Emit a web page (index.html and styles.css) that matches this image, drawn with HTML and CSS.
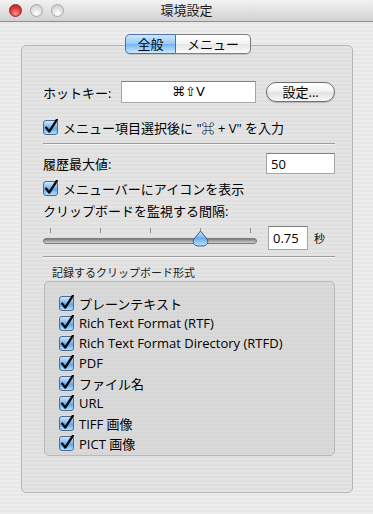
FILE: index.html
```html
<!DOCTYPE html>
<html lang="ja">
<head>
    <meta charset="UTF-8">
    <meta name="viewport" content="width=device-width, initial-scale=1.0">
    <title>環境設定</title>
    <link rel="stylesheet" href="styles.css">
</head>
<body>
    <svg class="defs" width="0" height="0">
        <defs>
            <linearGradient id="cbFill" x1="0" y1="0" x2="0" y2="1">
                <stop offset="0" stop-color="#d6ecff"/>
                <stop offset="0.45" stop-color="#7fb9f0"/>
                <stop offset="0.55" stop-color="#5fa6ea"/>
                <stop offset="1" stop-color="#b5e4ff"/>
            </linearGradient>
            <linearGradient id="thumbFill" x1="0" y1="0" x2="0" y2="1">
                <stop offset="0" stop-color="#cfe6fb"/>
                <stop offset="0.5" stop-color="#6eaeea"/>
                <stop offset="1" stop-color="#b9e4ff"/>
            </linearGradient>
            <linearGradient id="trackFill" x1="0" y1="0" x2="0" y2="1">
                <stop offset="0" stop-color="#6d6d6d"/>
                <stop offset="0.5" stop-color="#a8a8a8"/>
                <stop offset="1" stop-color="#d8d8d8"/>
            </linearGradient>
            <symbol id="cb" viewBox="0 0 16 16">
                <rect x="0.5" y="1.5" width="14" height="14" rx="2.5" fill="url(#cbFill)" stroke="#4a6b94"/>
                <path d="M3.2 8.6 L6.2 12.6 L13.8 0.8" fill="none" stroke="#0a0a0a" stroke-width="2.4" stroke-linecap="round" stroke-linejoin="round"/>
            </symbol>
        </defs>
    </svg>

    <div class="window">
        <div class="titlebar">
            <div class="lights">
                <span class="light close"></span>
                <span class="light"></span>
                <span class="light"></span>
            </div>
            <div class="title">環境設定</div>
            <div></div>
        </div>

        <div class="content">
            <div class="tabs">
                <span class="tab active">全般</span>
                <span class="tab">メニュー</span>
            </div>

            <div class="panel">
                <div class="row hotkey">
                    <span class="label">ホットキー:</span>
                    <span class="field keyfield">⌘⇧V</span>
                    <span class="button">設定...</span>
                </div>

                <label class="check first">
                    <svg class="cb"><use href="#cb"/></svg>
                    <span>メニュー項目選択後に "⌘ + V" を入力</span>
                </label>

                <div class="sep"></div>

                <div class="row history">
                    <span class="label">履歴最大値:</span>
                    <span class="field small">50</span>
                </div>

                <label class="check">
                    <svg class="cb"><use href="#cb"/></svg>
                    <span>メニューバーにアイコンを表示</span>
                </label>

                <div class="label interval">クリップボードを監視する間隔:</div>

                <div class="row slider-row">
                    <svg class="slider" width="214" height="24" viewBox="0 0 214 24">
                        <g stroke="#8a8a8a" stroke-width="1">
                            <line x1="7.5" y1="2" x2="7.5" y2="7"/>
                            <line x1="57.5" y1="2" x2="57.5" y2="7"/>
                            <line x1="107.5" y1="2" x2="107.5" y2="7"/>
                            <line x1="157.5" y1="2" x2="157.5" y2="7"/>
                            <line x1="207.5" y1="2" x2="207.5" y2="7"/>
                        </g>
                        <rect x="0.5" y="12.5" width="213" height="5" rx="2.5" fill="url(#trackFill)" stroke="#7c7c7c"/>
                        <path d="M157.5 5 L164 13 Q165.5 15 164.5 17.5 Q163 20 160 20 L155 20 Q152 20 150.5 17.5 Q149.5 15 151 13 Z" fill="url(#thumbFill)" stroke="#3f5f8c"/>
                    </svg>
                    <span class="field tiny">0.75</span>
                    <span class="unit">秒</span>
                </div>

                <div class="sep second"></div>

                <div class="caption">記録するクリップボード形式</div>

                <div class="group">
                    <label class="check item"><svg class="cb"><use href="#cb"/></svg><span>プレーンテキスト</span></label>
                    <label class="check item"><svg class="cb"><use href="#cb"/></svg><span>Rich Text Format (RTF)</span></label>
                    <label class="check item"><svg class="cb"><use href="#cb"/></svg><span>Rich Text Format Directory (RTFD)</span></label>
                    <label class="check item"><svg class="cb"><use href="#cb"/></svg><span>PDF</span></label>
                    <label class="check item"><svg class="cb"><use href="#cb"/></svg><span>ファイル名</span></label>
                    <label class="check item"><svg class="cb"><use href="#cb"/></svg><span>URL</span></label>
                    <label class="check item"><svg class="cb"><use href="#cb"/></svg><span>TIFF 画像</span></label>
                    <label class="check item"><svg class="cb"><use href="#cb"/></svg><span>PICT 画像</span></label>
                </div>
            </div>
        </div>
    </div>
</body>
</html>
```

FILE: styles.css
```css
body {
    margin: 0;
    font-family: "Open Sans", "Noto Sans CJK JP", sans-serif;
    font-size: 13px;
    color: #000;
    background: #ececec;
}
.defs {
    position: absolute;
}
.window {
    width: 373px;
    height: 514px;
    background: repeating-linear-gradient(to bottom, #ededed 0 2px, #e7e7e7 2px 4px);
    overflow: hidden;
}
.titlebar {
    height: 21px;
    display: grid;
    grid-template-columns: 1fr auto 1fr;
    align-items: center;
    background: linear-gradient(to bottom, #f2f2f2, #d2d2d2);
    border-bottom: 1px solid #8e8e8e;
}
.lights {
    display: flex;
    gap: 8px;
    padding-left: 9px;
}
.light {
    width: 13px;
    height: 13px;
    border-radius: 50%;
    box-sizing: border-box;
    border: 1px solid #a8a8a8;
    background: radial-gradient(circle at 50% 75%, #ffffff 0, #e6e6e6 40%, #c4c4c4 100%);
}
.light.close {
    border-color: #8f2a2a;
    background: radial-gradient(circle at 50% 75%, #ff9a9a 0, #e0443e 45%, #a81d1d 100%);
}
.title {
    font-size: 13px;
    line-height: 21px;
    color: #1a1a1a;
}
.content {
    padding: 12px 20px 0 21px;
}
.tabs {
    display: flex;
    justify-content: center;
    position: relative;
    z-index: 1;
    height: 20px;
    margin-left: 2px;
}
.tab {
    height: 20px;
    box-sizing: border-box;
    line-height: 18px;
    border: 1px solid #7d7d7d;
    background: linear-gradient(to bottom, #ffffff 0, #f3f3f3 50%, #e6e6e6 52%, #fafafa 100%);
    text-align: center;
    box-shadow: 0 1px 1px rgba(0, 0, 0, 0.15);
}
.tab:first-child {
    width: 51px;
    border-radius: 5px 0 0 5px;
}
.tab:last-child {
    width: 75px;
    border-left: none;
    border-radius: 0 5px 5px 0;
}
.tab.active {
    border-color: #4e72a6;
    background: linear-gradient(to bottom, #cde6fc 0, #9bcbf5 48%, #77b5ef 52%, #c6ebff 100%);
}
.panel {
    margin-top: -9px;
    height: 448px;
    box-sizing: border-box;
    padding: 35px 17px 0 21px;
    border: 1px solid #b4b4b4;
    border-radius: 5px;
    background: repeating-linear-gradient(to bottom, #e4e4e4 0 2px, #dfdfdf 2px 4px);
}
.row {
    display: flex;
    align-items: center;
}
.hotkey {
    height: 22px;
}
.hotkey .label {
    width: 78px;
}
.field {
    height: 22px;
    box-sizing: border-box;
    background: #fff;
    border: 1px solid #a5a5a5;
    border-top-color: #7f7f7f;
    line-height: 20px;
    padding: 0 4px;
}
.keyfield {
    width: 136px;
    text-align: center;
    font-family: "DejaVu Sans", sans-serif;
    font-size: 13px;
}
.button {
    margin-left: 10px;
    width: 69px;
    height: 20px;
    box-sizing: border-box;
    line-height: 18px;
    text-align: center;
    border: 1px solid #6e6e6e;
    border-radius: 10px;
    background: linear-gradient(to bottom, #ffffff 0, #f4f4f4 45%, #e2e2e2 55%, #f7f7f7 100%);
    box-shadow: 0 1px 1px rgba(0, 0, 0, 0.2);
}
.check {
    display: flex;
    align-items: center;
    height: 18px;
}
.check .cb {
    width: 16px;
    height: 16px;
    margin-right: 4px;
    flex: none;
}
.check.first {
    margin-top: 15px;
}
.sep {
    height: 1px;
    background: #9c9c9c;
    margin: 7px 0 0;
    border-bottom: 1px solid #f4f4f4;
}
.history {
    margin-top: 8px;
    justify-content: space-between;
}
.history .field {
    height: 21px;
}
.small {
    width: 69px;
}
.history + .check {
    margin-top: 5px;
}
.interval {
    margin-top: 5px;
    height: 19px;
    line-height: 19px;
}
.slider-row {
    margin-top: 5px;
    height: 24px;
}
.slider {
    flex: none;
}
.tiny {
    margin-left: 11px;
    width: 40px;
    height: 24px;
    line-height: 22px;
    padding: 0 4px;
}
.unit {
    margin-left: 6px;
    font-size: 11px;
}
.sep.second {
    margin-top: 6px;
}
.caption {
    margin-top: 7px;
    padding-left: 9px;
    font-size: 11px;
    line-height: 15px;
    color: #222;
}
.group {
    margin-top: 1px;
    margin-left: 1px;
    height: 175px;
    box-sizing: border-box;
    padding: 11px 0 0 14px;
    border: 1px solid #b8b8b8;
    border-radius: 5px;
    background: repeating-linear-gradient(to bottom, #dadada 0 2px, #d6d6d6 2px 4px);
}
.check.item {
    height: 20px;
}
```
